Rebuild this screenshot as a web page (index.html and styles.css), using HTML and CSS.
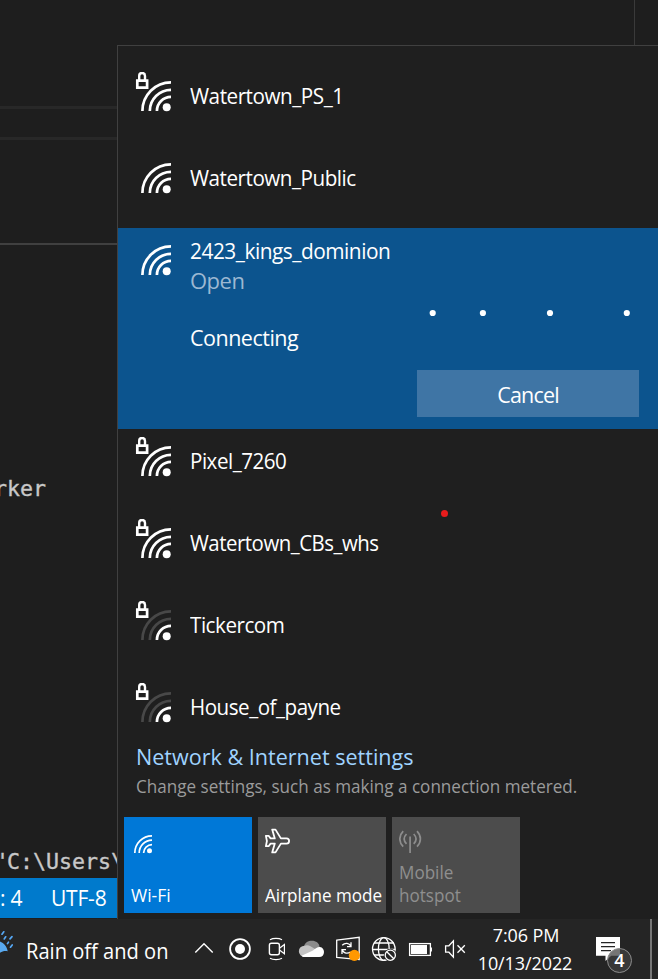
FILE: index.html
```html
<!DOCTYPE html>
<html lang="en">
<head>
<meta charset="utf-8">
<title>Wi-Fi networks</title>
<link rel="stylesheet" href="styles.css">
</head>
<body>
<svg width="0" height="0" class="defs" aria-hidden="true">
  <defs>
    <g id="arc-outer"><path d="M7.4 39A28.6 28.6 0 0 1 36 10.4"/></g>
    <g id="arc-middle"><path d="M14.8 39A21.2 21.2 0 0 1 36 17.8"/></g>
    <g id="arc-inner"><path d="M21.9 39A14.1 14.1 0 0 1 36 24.9"/></g>
    <g id="lock"><path d="M4.200 8V3.900a2.900 2.900 0 0 1 5.800 0V8" fill="none" stroke="#fff" stroke-width="2.400"/><path d="M2.300 8.700h9.800v6.900H2.300z" fill="none" stroke="#fff" stroke-width="2.700"/></g>
  </defs>
</svg>
<div class="screen">
  <main class="editor">
    <div class="top-pane"></div>
    <div class="tab-pane"></div>
    <div class="mid-pane"></div>
    <div class="code">
      <pre class="line-one">rker</pre>
      <pre class="line-two">"C:\Users\</pre>
    </div>
    <div class="status"><span class="col">: 4</span><span class="enc">UTF-8</span></div>
  </main>

  <section class="flyout">
    <ul class="networks">
      <li class="network">
        <svg class="signal" viewBox="0 0 37 40"><use href="#lock"/><g class="on"><use href="#arc-outer"/><use href="#arc-middle"/><use href="#arc-inner"/></g><circle cx="31.7" cy="35.3" r="4" fill="#fff"/></svg>
        <span class="name n1">Watertown_PS_1</span>
      </li>
      <li class="network">
        <svg class="signal" viewBox="0 0 37 40"><g class="on"><use href="#arc-outer"/><use href="#arc-middle"/><use href="#arc-inner"/></g><circle cx="31.7" cy="35.3" r="4" fill="#fff"/></svg>
        <span class="name n2">Watertown_Public</span>
      </li>
      <li class="network selected">
        <svg class="signal" viewBox="0 0 37 40"><g class="on"><use href="#arc-outer"/><use href="#arc-middle"/><use href="#arc-inner"/></g><circle cx="31.7" cy="35.3" r="4" fill="#fff"/></svg>
        <div class="details">
          <span class="name n3">2423_kings_dominion</span>
          <span class="security">Open</span>
          <svg class="progress" viewBox="0 0 450 8"><g fill="#fff"><circle cx="242.7" cy="4" r="3.1"/><circle cx="292.9" cy="4" r="3.1"/><circle cx="360" cy="4" r="3.1"/><circle cx="436.8" cy="4" r="3.1"/></g></svg>
          <span class="state">Connecting</span>
          <button class="cancel">Cancel</button>
        </div>
      </li>
      <li class="network">
        <svg class="signal" viewBox="0 0 37 40"><use href="#lock"/><g class="on"><use href="#arc-outer"/><use href="#arc-middle"/><use href="#arc-inner"/></g><circle cx="31.7" cy="35.3" r="4" fill="#fff"/></svg>
        <span class="name n4">Pixel_7260</span>
      </li>
      <li class="network">
        <svg class="signal" viewBox="0 0 37 40"><use href="#lock"/><g class="on"><use href="#arc-outer"/><use href="#arc-middle"/><use href="#arc-inner"/></g><circle cx="31.7" cy="35.3" r="4" fill="#fff"/></svg>
        <span class="name n5">Watertown_CBs_whs</span>
      </li>
      <li class="network">
        <svg class="signal" viewBox="0 0 37 40"><use href="#lock"/><g class="off"><use href="#arc-outer"/><use href="#arc-middle"/></g><g class="on"><use href="#arc-inner"/></g><circle cx="31.7" cy="35.3" r="4" fill="#fff"/></svg>
        <span class="name n6">Tickercom</span>
      </li>
      <li class="network last">
        <svg class="signal" viewBox="0 0 37 40"><use href="#lock"/><g class="off"><use href="#arc-outer"/><use href="#arc-middle"/></g><g class="on"><use href="#arc-inner"/></g><circle cx="31.7" cy="35.3" r="4" fill="#fff"/></svg>
        <span class="name n7">House_of_payne</span>
      </li>
    </ul>
    <div class="settings">
      <a class="settings-link">Network &amp; Internet settings</a>
      <p class="settings-note">Change settings, such as making a connection metered.</p>
    </div>
    <div class="tiles">
      <div class="tile active">
        <svg viewBox="0 0 26 26"><g fill="none" stroke="#fff" stroke-width="1.7"><path d="M3.8 25A17.2 17.2 0 0 1 21 7.8M8.2 25A12.8 12.8 0 0 1 21 12.2M12.6 25A8.4 8.4 0 0 1 21 16.6"/></g><circle cx="18.5" cy="22.7" r="2.5" fill="#fff"/></svg>
        <span class="t1">Wi-Fi</span>
      </div>
      <div class="tile">
        <svg viewBox="0 0 26 26"><path d="M7.2 1.6h3.3l5.4 8.8h5.600a2.600 2.600 0 0 1 0 5.200h-5.600l-5.400 8.800H7.200l2.600-8.800H5.600l-2 2.600H.9l1-5.200-1-5.200h2.700l2 2.600h4.200z" fill="none" stroke="#fff" stroke-width="1.800" stroke-linejoin="round"/></svg>
        <span class="t2">Airplane mode</span>
      </div>
      <div class="tile disabled">
        <svg viewBox="0 0 26 26"><g fill="none" stroke="#8d8d8d" stroke-width="1.700"><path d="M11.100 8.500V25M4.200 3.200C-.3 7.800-.3 14 4.200 18.600M7.500 6C4.600 9 4.600 12.800 7.500 15.800M14.700 6c2.900 3 2.900 6.800 0 9.800M18 3.200c4.500 4.600 4.500 10.800 0 15.400"/></g></svg>
        <span class="t3">Mobile<br>hotspot</span>
      </div>
    </div>
    <i class="record-dot"></i>
  </section>

  <footer class="taskbar">
    <svg class="weather" viewBox="0 0 16 60"><path d="M0 22.500c4 1.500 7 5 7.700 9.800-2.700-.7-5-.2-7.700 1.400z" fill="#59a9ee"/><g stroke="#56a8f5" stroke-width="1.700" stroke-linecap="round"><path d="M2 15.200l1.800-2.400M4.200 19.900l1.500-2.100M10 19.900l2-2.300M7.500 24.600l1-1.500M10.500 28.200l1.700-2.300"/></g></svg>
    <span class="forecast">Rain off and on</span>
    <svg class="tray" viewBox="180 919 300 60">
      <g fill="none" stroke="#fff" stroke-width="1.400">
        <path d="M195.300 952.600l8.700-8.900 8.700 8.900"/>
        <circle cx="240" cy="949" r="9.900" stroke-width="1.800"/>
        <rect x="269.400" y="943.200" width="10" height="11.600" rx="2"/>
        <path d="M279.800 948l4.600-3.500v9.300l-4.600-3.500M270 939.700c3-1.800 9-1.800 12 0M270 958.200c3 1.800 9 1.800 12 0" stroke-width="1.200"/>
      </g>
      <path d="M304 946.500c1-4 4-5.700 8-5.700 4 0 7 2.200 7.600 6l-5.600 5z" fill="#8b8b8b"/>
      <circle cx="240" cy="949" r="5" fill="#fff"/>
      <path d="M304.500 957a5.400 5.400 0 0 1 0-11.300c2-.9 4.200-.6 6 .5l7.500 4.600-13 6z" fill="#c3c3c3"/>
      <path d="M301.500 955.800l11.500-5.300c3-2.500 5-4 7-3.500 2.500.3 4 2.500 4 5 0 3-1.800 5-4.800 5h-14.700c-1.500 0-2.300-.4-3-1.200z" fill="#fff"/>
      <g fill="none" stroke="#fff" stroke-width="1.300">
        <path d="M336.700 940.200l22.500-2.900v22.300l-22.500-2.200z"/>
        <path d="M342.200 945.300c3-3 7-2.300 8.700.800M351 942.300v4.300h-4M350.500 952c-3 2-6.500 1.500-8.300-2M342 954v-4.300h4"/>
        <circle cx="383.800" cy="949" r="11.300"/>
        <ellipse cx="383.800" cy="949" rx="5.400" ry="11.300"/>
        <path d="M374 943h20M372.500 949.500h23M374 955h12"/>
      </g>
      <circle cx="354.400" cy="955.400" r="5.600" fill="#ff9800"/>
      <circle cx="390.300" cy="955.200" r="6.400" fill="#252525"/>
      <g fill="none" stroke="#fff" stroke-width="1.300">
        <circle cx="390.300" cy="955.200" r="5.100"/><path d="M386.800 951.700l7 7"/>
        <rect x="409.600" y="943.600" width="20.800" height="11.800"/>
        <path d="M431.300 947.500v4"/>
        <path d="M445.600 945.800h3.300l4.500-4.900v16.200l-4.500-4.900h-3.300zM457.500 945.300l7.300 7.500M464.800 945.300l-7.300 7.500"/>
      </g>
      <path d="M411 945h16v9h-16z" fill="#fff"/>
    </svg>
    <div class="clock"><span class="time">7:06 PM</span><span class="date">10/13/2022</span></div>
    <div class="notifications">
      <svg viewBox="0 0 24 24"><path d="M0 0h24v18.700H15.200L9.500 24v-5.300H0z" fill="#fff"/><path d="M5 5.700h14M5 9.700h14M5 13.700h10" stroke="#252525" stroke-width="1.200"/></svg>
      <span class="count">4</span>
    </div>
    <i class="peek"></i>
  </footer>
</div>
</body>
</html>
```
FILE: styles.css
```css
* { box-sizing: border-box; }
body { margin: 0; background: #1e1e1e; font-family: "Open Sans", sans-serif; color: #fff; }
.defs { position: absolute; }
.screen { position: relative; width: 658px; height: 979px; overflow: hidden; display: flex; flex-direction: column; }

.editor { height: 919px; display: flex; flex-direction: column; }
.top-pane { height: 109px; border-bottom: 3px solid #282828; width: 635px; border-right: 1px solid #3a3a3a; }
.tab-pane { height: 31px; border-bottom: 3px solid #282828; }
.mid-pane { height: 105px; border-bottom: 2px solid #404040; }
.code { width: 117px; height: 633px; overflow: hidden; padding-top: 229px; }
.code pre { margin: 0 0 0 -6px; font: 21.6px/30px "DejaVu Sans Mono", monospace; color: #c8c8c8; -webkit-text-stroke: .35px #c8c8c8; }
.line-two { padding-top: 343px; }
.status { width: 117px; height: 40px; background: #007acc; display: flex; align-items: center; font-size: 21px; letter-spacing: -.2px; white-space: nowrap; }
.col { width: 51px; }

.flyout { position: absolute; left: 117px; top: 45px; width: 541px; height: 874px; background: #1f1f1f; border: solid #404040; border-width: 1px 0 0 1px; }
.networks { list-style: none; margin: 0; padding: 18px 0 0; height: 689px; overflow: hidden; }
.network { height: 82px; padding: 8px 0 0 17px; display: flex; font-size: 21.5px; letter-spacing: -.5px; }
.signal { width: 37px; height: 40px; flex: none; margin-right: 18px; }
.signal .on { fill: none; stroke: #fff; stroke-width: 2.7; }
.signal .off { fill: none; stroke: #484848; stroke-width: 2.7; }
.name { line-height: 30px; padding-top: 9px; white-space: nowrap; transform-origin: left; }
.n1 { transform: scaleX(.962); }
.n2 { transform: scaleX(.96); }
.n3 { transform: scaleX(.97); }
.n4 { transform: scaleX(.957); }
.n5 { transform: scaleX(.948); }
.n6 { transform: scaleX(.96); }
.n7 { transform: scaleX(.957); }
.selected { height: 201px; background: #0c548e; }
.details { width: 450px; display: flex; flex-direction: column; }
.details .name { line-height: 30px; padding-top: 0; }
.security { line-height: 28px; font-size: 22px; color: #9cb8d2; }
.progress { width: 450px; height: 8px; margin-top: 15px; }
.state { line-height: 30px; margin-top: 6px; }
.cancel { width: 222px; height: 47px; margin: 17px 0 0 227px; border: 0; padding: 1px 0 0; background: #3f75a5; color: #fff; font: inherit; letter-spacing: -.8px; }

.settings { padding: 7px 0 0 18px; height: 82px; }
.settings-link { display: block; font-size: 22.5px; line-height: 30px; color: #9fd3ff; white-space: nowrap; transform: scaleX(.958); transform-origin: left; }
.settings-note { margin: 0; font-size: 17.5px; line-height: 29px; color: #9b9b9b; white-space: nowrap; transform: scaleX(.976); transform-origin: left; }
.tiles { display: flex; gap: 6px; padding-left: 6px; }
.tile { width: 128px; height: 96px; padding: 11px 0 6px 7px; background: #4c4c4c; display: flex; flex-direction: column; justify-content: space-between; font-size: 17.5px; line-height: 23px; white-space: nowrap; }
.tile svg { width: 26px; height: 26px; flex: none; }
.t2, .t3 { transform: scaleX(.977); transform-origin: left; }
.active { background: #0078d7; }
.disabled { color: #8f8f8f; }
.record-dot { position: absolute; left: 323px; top: 464px; width: 7px; height: 7px; border-radius: 50%; background: #e81c1c; }

.taskbar { height: 60px; background: #252525; display: flex; }
.weather { width: 16px; height: 60px; margin-right: 10px; }
.forecast { width: 154px; line-height: 64px; font-size: 21.5px; white-space: nowrap; transform: scaleX(.935); transform-origin: left; }
.tray { width: 300px; height: 60px; }
.clock { width: 92px; display: flex; flex-direction: column; align-items: center; font-size: 18px; letter-spacing: -.1px; line-height: 28px; padding-top: 2px; white-space: nowrap; }
.date { margin-left: -2px; }
.notifications { position: relative; width: 54px; padding: 18px 0 0 24px; }
.notifications svg { width: 24px; height: 24px; display: block; }
.count { position: absolute; left: 35px; top: 29px; width: 25px; height: 25px; border: 1px solid #8c8c8c; border-radius: 50%; background: rgba(64, 64, 64, .72); font-size: 18px; font-weight: 600; line-height: 23px; text-align: center; }
.peek { width: 2px; height: 60px; margin-left: 24px; background: #777; }
```
